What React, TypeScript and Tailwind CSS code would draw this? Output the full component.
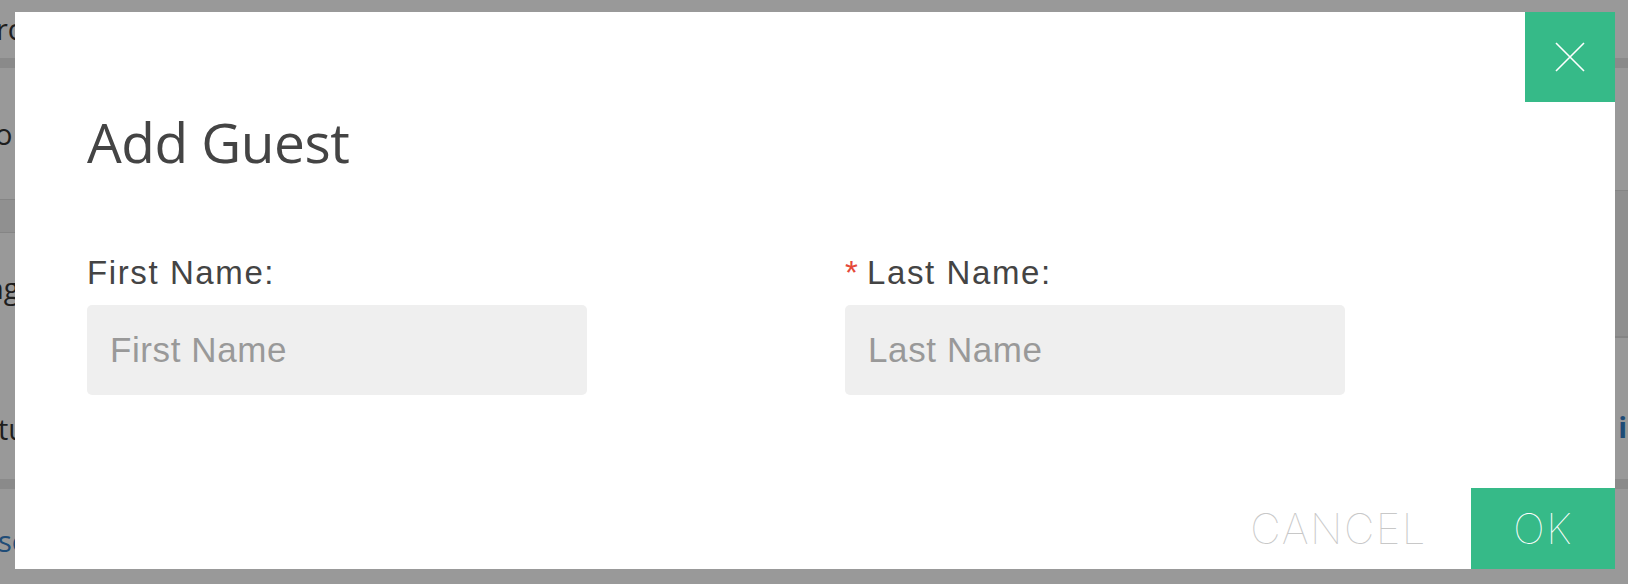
import { useState } from "react";

function CloseIcon() {
  return (
    <svg width="30" height="30" viewBox="0 0 30 30" fill="none">
      <path d="M1 1 L29 29 M29 1 L1 29" stroke="#ffffff" strokeWidth="1.6" />
    </svg>
  );
}

function Field({ label, placeholder, required }: { label: string; placeholder: string; required?: boolean }) {
  const [value, setValue] = useState("");
  return (
    <div className="flex flex-col">
      <label className="text-[33px] leading-none tracking-[1.6px] text-[#444444] mb-[16px] whitespace-nowrap">
        {required && <span className="text-[#e5493a] tracking-normal">* </span>}
        {label}
      </label>
      <input
        value={value}
        onChange={(e) => setValue(e.target.value)}
        placeholder={placeholder}
        className="w-[500px] h-[90px] rounded-[5px] bg-[#efefef] pl-[23px] text-[35px] tracking-[0.6px] text-[#444444] placeholder:text-[#999999] outline-none"
      />
    </div>
  );
}

export default function App() {
  return (
    <div className="relative w-full h-[584px] overflow-hidden bg-[#999999] flex font-['Open_Sans',sans-serif]">
      {/* page behind the overlay */}
      <div className="flex-1 flex flex-col">
        <div className="h-[58px] pt-[7px] text-[29px] text-[#1e1e1e] -ml-[4px]">rch</div>
        <div className="h-[10px] bg-[#8a8a8a]" />
        <div className="h-[131px] pt-[51px] text-[29px] text-[#1e1e1e] leading-none -ml-[5px]">o</div>
        <div className="h-[34px] bg-[#909090] border-y border-[#858585]" />
        <div className="h-[246px] flex flex-col text-[29px] leading-none text-[#1e1e1e]">
          <span className="mt-[40px] -ml-[14px]">ng</span>
          <span className="mt-[112px] -ml-[2px]">tu</span>
        </div>
        <div className="h-[10px] bg-[#8a8a8a]" />
        <div className="flex-1 pt-[37px] text-[29px] leading-none text-[#1f4c77] -ml-[2px]">se</div>
      </div>
      <div className="w-[600px] flex flex-col">
        <div className="h-[58px]" />
        <div className="h-[10px] bg-[#8a8a8a]" />
        <div className="h-[122px]" />
        <div className="h-[148px] bg-[#8f8f8f] border-t border-b-2 border-[#858585]" />
        <div className="h-[141px] pt-[74px] text-right text-[29px] font-bold leading-none text-[#1f4c77] -mr-[14px]">
          ic
        </div>
        <div className="h-[10px] bg-[#8a8a8a]" />
        <div className="flex-1" />
      </div>

      {/* modal */}
      <div className="absolute left-[15px] top-[12px] w-[1600px] h-[557px] bg-white flex flex-col">
        <button className="absolute right-0 top-0 w-[90px] h-[90px] bg-[#36ba88] flex items-center justify-center">
          <CloseIcon />
        </button>
        <div className="pl-[72px] pt-[102px]">
          <h1 className="text-[55px] leading-none tracking-[-0.5px] text-[#444444]">Add Guest</h1>
          <div className="grid grid-cols-[758px_500px] mt-[87px] font-['Liberation_Sans',Arial,sans-serif]">
            <Field label="First Name:" placeholder="First Name" />
            <Field label="Last Name:" placeholder="Last Name" required />
          </div>
        </div>
        <div className="mt-auto flex justify-end items-stretch h-[81px] font-['Inter',sans-serif]">
          <button className="mr-[44px] text-[42px] font-thin tracking-[1.5px] text-[#c8c8c8] leading-none">CANCEL</button>
          <button className="w-[144px] bg-[#36ba88] text-[42px] font-thin tracking-[1.5px] text-white leading-none">OK</button>
        </div>
      </div>
    </div>
  );
}
